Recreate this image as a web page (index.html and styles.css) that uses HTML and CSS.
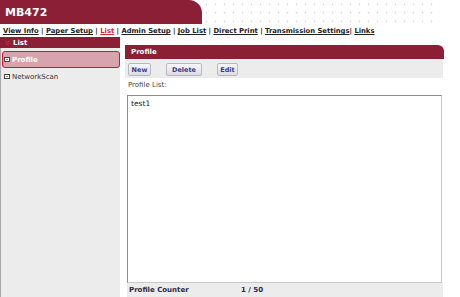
FILE: index.html
```html
<!DOCTYPE html>
<html lang="en">
<head>
    <meta charset="UTF-8">
    <title>MB472</title>
    <link rel="stylesheet" href="styles.css">
</head>
<body>
    <div class="top">
        <div class="brand">MB472</div>
        <div class="dots"></div>
    </div>
    <div class="nav">
        <a href="#">View Info</a> | <a href="#">Paper Setup</a> | <a href="#" class="current">List</a> | <a href="#">Admin Setup</a> | <a href="#">Job List</a> | <a href="#">Direct Print</a> | <a href="#">Transmission Settings</a>| <a href="#">Links</a>
    </div>
    <div class="main">
        <aside class="side">
            <div class="side-head">
                <svg class="caret" width="5" height="6" viewBox="0 0 5 6">
                    <path d="M0.5 0.5 L2.5 2.5 L4.5 0.5 M0.5 3 L2.5 5 L4.5 3" fill="none" stroke="#e8283c" stroke-width="1"/>
                </svg>
                List
            </div>
            <ul class="side-list">
                <li class="side-item selected">
                    <span class="item-icon"></span>Profile
                </li>
                <li class="side-item">
                    <span class="item-icon"></span>NetworkScan
                </li>
            </ul>
        </aside>
        <section class="content">
            <div class="panel-head">Profile</div>
            <div class="toolbar">
                <button class="btn">New</button>
                <button class="btn btn-wide">Delete</button>
                <button class="btn">Edit</button>
            </div>
            <div class="list-label">Profile List:</div>
            <div class="list-box">
                <div class="list-row">test1</div>
            </div>
            <div class="counter">
                <span class="counter-name">Profile Counter</span>
                <span class="counter-value">1 / 50</span>
            </div>
        </section>
    </div>
</body>
</html>
```

FILE: styles.css
```css
/* Reset & Basic Styling */
* {
    margin: 0;
    padding: 0;
    box-sizing: border-box;
}
body {
    font-family: 'DejaVu Sans', Verdana, sans-serif;
    font-size: 7px;
    color: #333;
    background: #fff;
    width: 460px;
    height: 297px;
    overflow: hidden;
}

/* Header band */
.top {
    display: flex;
    height: 24px;
}
.brand {
    width: 202px;
    background: #8a1f36;
    color: #fff;
    font-weight: bold;
    font-size: 11px;
    line-height: 26px;
    padding-left: 5px;
    border-top-right-radius: 13px;
}
.dots {
    width: 238px;
    background-image: radial-gradient(circle, #d8d8d8 0.7px, transparent 1.1px);
    background-size: 9px 8.5px;
    background-position: 0 0;
}

/* Navigation */
.nav {
    height: 13px;
    line-height: 14px;
    padding-left: 3px;
    font-weight: bold;
    font-size: 6.8px;
    color: #222;
    white-space: nowrap;
}
.nav a {
    color: #222;
    text-decoration: underline;
}
.nav a.current {
    color: #d8262e;
}

/* Layout */
.main {
    display: flex;
    gap: 5px;
    height: 260px;
}

/* Side menu */
.side {
    width: 120px;
    background: #ececec;
    border-left: 1px solid #a8a8a8;
}
.side-head {
    display: flex;
    align-items: center;
    gap: 3px;
    height: 11px;
    margin-left: -1px;
    padding-left: 5px;
    background: #8a1f36;
    color: #fff;
    font-weight: bold;
}
.side-list {
    list-style: none;
    padding: 3px 0 0 1px;
}
.side-item {
    display: flex;
    align-items: center;
    gap: 2px;
    height: 17px;
    padding-left: 2px;
    color: #333;
}
.side-item.selected {
    background: #d7a3ac;
    border: 1px solid #e3102a;
    border-radius: 3px;
    color: #fff;
    font-weight: bold;
    padding-left: 1px;
}
.item-icon {
    width: 6px;
    height: 5px;
    border: 1px solid #444;
    background: #fff;
    position: relative;
}
.item-icon::after {
    content: "";
    position: absolute;
    left: 1px;
    right: 1px;
    top: 1px;
    height: 1px;
    background: #888;
}

/* Content panel */
.content {
    width: 319px;
    padding-top: 8px;
}
.panel-head {
    height: 14px;
    line-height: 14px;
    padding-left: 6px;
    background: #8a1f36;
    color: #fff;
    font-weight: bold;
    border-top-right-radius: 6px;
}
.toolbar {
    display: flex;
    align-items: center;
    height: 19px;
    padding: 0 3px;
    background: #ececec;
    margin-right: 1px;
}
.btn {
    height: 13px;
    width: 23px;
    margin-top: 2px;
    margin-right: 15px;
    font-family: inherit;
    font-size: 6.5px;
    font-weight: bold;
    color: #3b3b82;
    background: linear-gradient(#f6f6fa, #dcdce4);
    border: 1px solid #b8b8c0;
    border-radius: 2px;
}
.btn-wide {
    width: 36px;
}
.btn:last-child {
    width: 21px;
}
.list-label {
    height: 17px;
    line-height: 15px;
    padding-left: 3px;
    color: #444;
}
.list-box {
    height: 188px;
    margin: 0 2px;
    background: #fff;
    border: 1px solid #c8c8c8;
    border-top-color: #8c8c8c;
    border-left-color: #8c8c8c;
    padding: 3px 3px;
}
.list-row {
    font-size: 7.5px;
    color: #222;
}
.counter {
    display: flex;
    height: 16px;
    line-height: 14px;
    margin: 0 1px 0 2px;
    background: #ececec;
    font-weight: bold;
    color: #2a2a44;
}
.counter-name {
    width: 114px;
    padding-left: 2px;
}
```
